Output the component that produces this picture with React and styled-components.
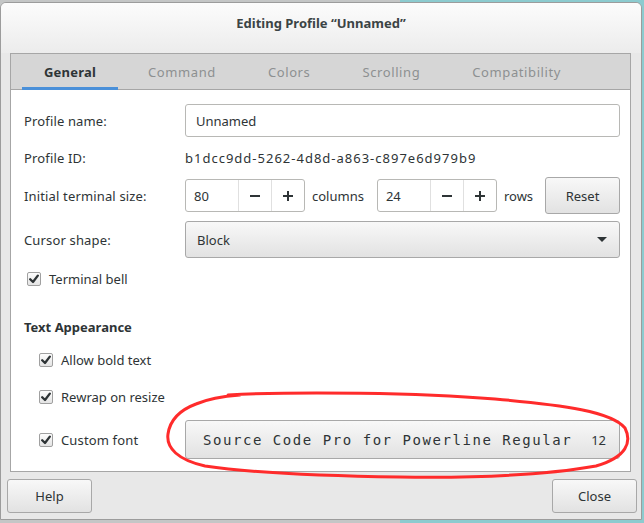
import React from 'react';
import styled, { createGlobalStyle } from 'styled-components';

const Global = createGlobalStyle`
  html, body { margin: 0; padding: 0; }
  body {
    font-family: "Noto Sans", "Open Sans", sans-serif;
    font-size: 13px;
    color: #2e3436;
  }
`;

const Desktop = styled.div`
  position: relative;
  width: 644px;
  height: 523px;
  overflow: hidden;
  background: linear-gradient(to right, #c4c6c6 0 400px, #8ccbcf 400px);
`;

const Window = styled.div`
  box-sizing: border-box;
  margin-top: 2px;
  width: 642px;
  height: 518px;
  border: 1px solid #9c9c9c;
  border-radius: 6px 6px 0 0;
  background: #e8e8e8;
  display: flex;
  flex-direction: column;
  overflow: hidden;
`;

const TitleBar = styled.div`
  height: 50px;
  flex: 0 0 50px;
  box-sizing: border-box;
  padding-top: 11px;
  text-align: center;
  line-height: 18px;
  font-weight: 700;
  color: #3b4445;
  background: linear-gradient(#fcfcfc, #ececec);
`;

const Frame = styled.div`
  margin: 0 10px 0 9px;
  height: 419px;
  box-sizing: border-box;
  border: 1px solid #a6a6a6;
  display: flex;
  flex-direction: column;
  background: #fff;
`;

const TabBar = styled.div`
  height: 35px;
  flex: 0 0 35px;
  display: flex;
  padding-left: 7px;
  background: #d6d6d6;
  border-bottom: 1px solid #a6a6a6;
`;

const Tab = styled.div`
  position: relative;
  margin: 0 4px;
  padding: 0 22px;
  display: flex;
  align-items: center;
  letter-spacing: ${p => (p.$active ? 0.2 : 0.6)}px;
  font-weight: ${p => (p.$active ? 700 : 400)};
  color: ${p => (p.$active ? '#2e3436' : '#8d9091')};
  ${p => p.$active && `
    &::after {
      content: '';
      position: absolute;
      left: 0; right: 0; bottom: -1px;
      height: 3px;
      background: #4a90d9;
    }
  `}
`;

const Content = styled.div`
  flex: 1;
  padding: 14px 10px 12px 13px;
  display: flex;
  flex-direction: column;
`;

const Row = styled.div`
  display: flex;
  align-items: center;
  height: ${p => p.$h}px;
  margin-top: ${p => p.$mt || 0}px;
  margin-left: ${p => p.$indent || 0}px;
`;

const Label = styled.div`
  flex: 0 0 ${p => p.$w || 161}px;
  letter-spacing: 0.15px;
`;

const Heading = styled.div`
  font-weight: 700;
`;

const IdText = styled.span`
  letter-spacing: 1px;
`;

const Entry = styled.div`
  flex: 1;
  align-self: stretch;
  box-sizing: border-box;
  border: 1px solid #b8b8b5;
  border-radius: 3px;
  background: #fff;
  display: flex;
  align-items: center;
  padding-left: 10px;
`;

const Spin = styled.div`
  display: flex;
  height: 33px;
  box-sizing: border-box;
  border: 1px solid #b8b8b5;
  border-radius: 3px;
  background: #fff;
`;

const SpinValue = styled.div`
  width: 52px;
  box-sizing: border-box;
  padding-left: 8px;
  display: flex;
  align-items: center;
`;

const SpinBtn = styled.div`
  width: 32px;
  border-left: 1px solid #e0e0e0;
  display: flex;
  align-items: center;
  justify-content: center;
`;

const Unit = styled.span`
  margin: 0 ${p => p.$right}px 0 7px;
`;

const Button = styled.div`
  box-sizing: border-box;
  height: ${p => p.$h || 34}px;
  width: ${p => (p.$w ? `${p.$w}px` : 'auto')};
  flex: ${p => (p.$grow ? 1 : 'none')};
  border: 1px solid #a8a8a8;
  border-radius: 3px;
  background: linear-gradient(#f8f8f8, #e2e2e2);
  display: flex;
  align-items: center;
  justify-content: ${p => p.$justify || 'center'};
  padding: ${p => p.$pad || '0'};
  color: #2e3436;
`;

const Arrow = styled.div`
  width: 0;
  height: 0;
  border-left: 5px solid transparent;
  border-right: 5px solid transparent;
  border-top: 5px solid #2e3436;
`;

const CheckBox = styled.div`
  width: 14px;
  height: 14px;
  box-sizing: border-box;
  border: 1px solid #a0a0a0;
  border-radius: 2px;
  background: linear-gradient(#fdfdfd, #e4e4e4);
  margin-right: 8px;
  display: flex;
  align-items: center;
  justify-content: center;
`;

const FontName = styled.span`
  font-family: "DejaVu Sans Mono", "Liberation Mono", monospace;
  font-size: 14px;
  letter-spacing: 1.55px;
  color: #2e3436;
`;

const FontSize = styled.span`
  color: #2e3436;
`;

const Footer = styled.div`
  flex: 1;
  display: flex;
  justify-content: space-between;
  align-items: flex-start;
  padding: 7px 4px 0 6px;
`;

const Ink = styled.svg`
  position: absolute;
  left: 0;
  top: 0;
  pointer-events: none;
`;

const Check = () => (
  <svg width="10" height="10" viewBox="0 0 10 10">
    <path d="M1.2 5.2 L4 8 L8.8 1.6" fill="none" stroke="#2e3436" strokeWidth="2.3" strokeLinecap="round" strokeLinejoin="round" />
  </svg>
);

const Minus = () => (
  <svg width="10" height="10" viewBox="0 0 10 10">
    <rect x="0" y="4" width="10" height="2" fill="#2e3436" />
  </svg>
);

const Plus = () => (
  <svg width="10" height="10" viewBox="0 0 10 10">
    <rect x="0" y="4" width="10" height="2" fill="#2e3436" />
    <rect x="4" y="0" width="2" height="10" fill="#2e3436" />
  </svg>
);

function SpinBox({ value }) {
  return (
    <Spin>
      <SpinValue>{value}</SpinValue>
      <SpinBtn><Minus /></SpinBtn>
      <SpinBtn><Plus /></SpinBtn>
    </Spin>
  );
}

function CheckItem({ label }) {
  return (
    <>
      <CheckBox><Check /></CheckBox>
      <span>{label}</span>
    </>
  );
}

const tabs = ['General', 'Command', 'Colors', 'Scrolling', 'Compatibility'];

export default function App() {
  return (
    <Desktop>
      <Global />
      <Window>
        <TitleBar>Editing Profile “Unnamed”</TitleBar>
        <Frame>
          <TabBar>
            {tabs.map((t, i) => <Tab key={t} $active={i === 0}>{t}</Tab>)}
          </TabBar>
          <Content>
            <Row $h={33}>
              <Label>Profile name:</Label>
              <Entry>Unnamed</Entry>
            </Row>
            <Row $h={20} $mt={11}>
              <Label>Profile ID:</Label>
              <IdText>b1dcc9dd-5262-4d8d-a863-c897e6d979b9</IdText>
            </Row>
            <Row $h={37} $mt={9}>
              <Label>Initial terminal size:</Label>
              <SpinBox value="80" />
              <Unit $right={13}>columns</Unit>
              <SpinBox value="24" />
              <Unit $right={12}>rows</Unit>
              <Button $h={37} $grow>Reset</Button>
            </Row>
            <Row $h={37} $mt={7}>
              <Label>Cursor shape:</Label>
              <Button $h={37} $grow $justify="space-between" $pad="0 12px 0 11px">
                <span>Block</span>
                <Arrow />
              </Button>
            </Row>
            <Row $h={20} $mt={11} $indent={3}>
              <CheckItem label="Terminal bell" />
            </Row>
            <Row $h={20} $mt={28}>
              <Heading>Text Appearance</Heading>
            </Row>
            <Row $h={20} $mt={13} $indent={15}>
              <CheckItem label="Allow bold text" />
            </Row>
            <Row $h={20} $mt={17} $indent={15}>
              <CheckItem label="Rewrap on resize" />
            </Row>
            <Row $h={39} $mt={13} $indent={15}>
              <Label $w={146}>
                <Row $h={20}>
                  <CheckItem label="Custom font" />
                </Row>
              </Label>
              <Button $h={39} $grow $justify="space-between" $pad="0 13px 0 17px">
                <FontName>Source Code Pro for Powerline Regular</FontName>
                <FontSize>12</FontSize>
              </Button>
            </Row>
          </Content>
        </Frame>
        <Footer>
          <Button $w={85}>Help</Button>
          <Button $w={85}>Close</Button>
        </Footer>
      </Window>
      <Ink width="644" height="523" viewBox="0 0 644 523">
        <path
          d="M228 395 C 300 391, 420 393, 495 399 C 565 405, 612 412, 625 428 C 632 442, 627 457, 596 466 C 540 476, 470 478, 400 477 C 330 476, 260 474, 205 466 C 178 460, 166 448, 168 434 C 170 420, 180 410, 196 404 C 210 398, 226 396, 240 395"
          fill="none"
          stroke="#ff2b2b"
          strokeWidth="3"
          strokeLinecap="round"
        />
      </Ink>
    </Desktop>
  );
}
